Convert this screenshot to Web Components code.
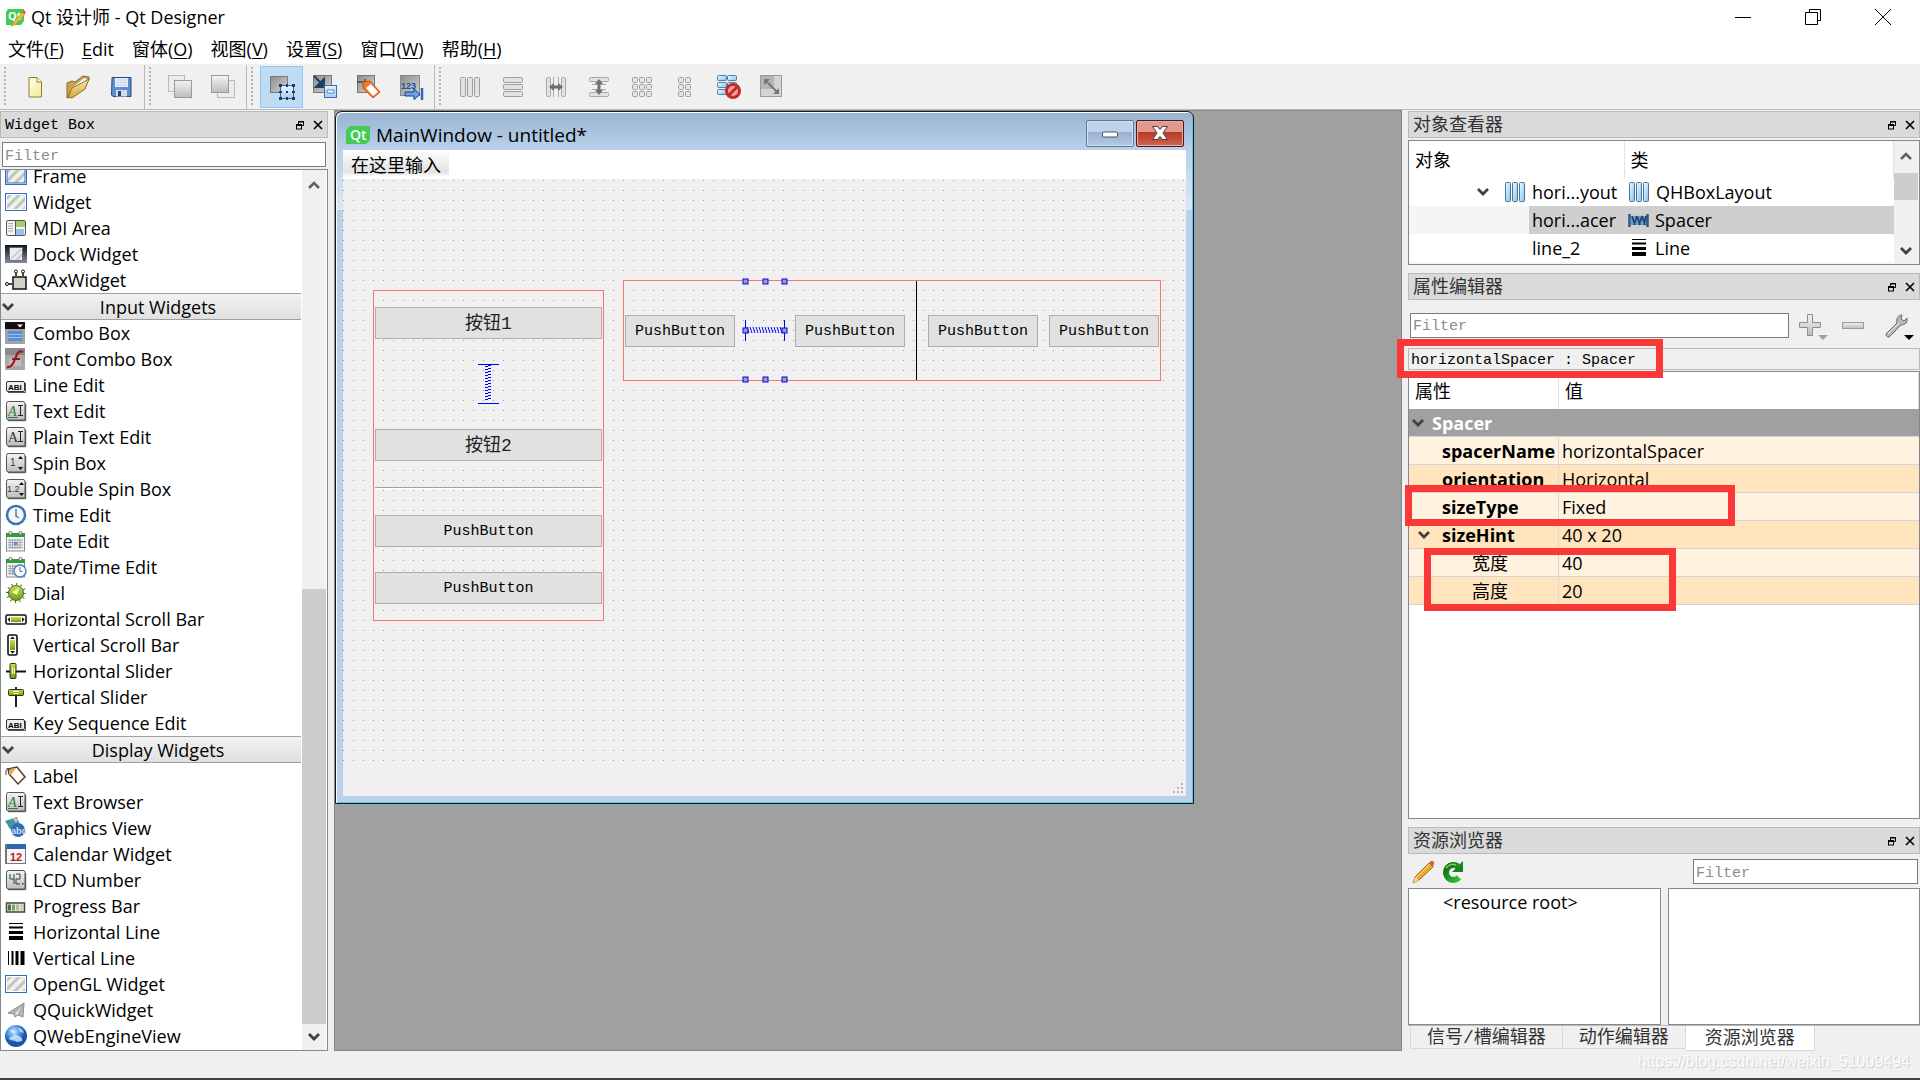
<!DOCTYPE html>
<html lang="zh-CN">
<head>
<meta charset="utf-8">
<title>Qt 设计师 - Qt Designer</title>
<style>
  html, body { height: 100%; margin: 0; }
  body {
    --ui: "Open Sans", "Noto Sans CJK SC", sans-serif;
    --mono: "Liberation Mono", "Noto Sans CJK SC", monospace;
    --line: #828790;
    --soft: #bababa;
    --face: #f0f0f0;
    font: 18px/26px var(--ui);
    color: #000;
    background: var(--face);
    overflow: hidden;
  }
</style>
</head>
<body>
<designer-app></designer-app>

<script>
const define = (name, html, setup) => {
  const template = document.createElement('template');
  template.innerHTML = html;
  customElements.define(name, class extends HTMLElement {
    constructor() {
      super();
      this.attachShadow({ mode: 'open' }).append(template.content.cloneNode(true));
    }
    connectedCallback() { if (setup) setup.call(this, this.shadowRoot); }
  });
};

/* ---------- icons ---------- */
const DEFS = `<defs>
  <linearGradient id="gr" x2="0" y2="1"><stop stop-color="#f4f4f4"/><stop offset="1" stop-color="#bcbcbc"/></linearGradient>
  <linearGradient id="dg" x2="1" y2="1"><stop stop-color="#8c8c8c"/><stop offset="1" stop-color="#d4d4d4"/></linearGradient>
  <linearGradient id="bl" x2="1" y2="1"><stop stop-color="#f2fbff"/><stop offset="1" stop-color="#7cc3ee"/></linearGradient>
  <linearGradient id="lb" x2="0" y2="1"><stop stop-color="#eaf2ff"/><stop offset="1" stop-color="#a9caf5"/></linearGradient>
  <linearGradient id="ye" x2="1" y2="1"><stop stop-color="#fffdee"/><stop offset="1" stop-color="#f7e88c"/></linearGradient>
  <linearGradient id="fo" x2="0" y2="1"><stop stop-color="#fbe9a4"/><stop offset="1" stop-color="#d9a638"/></linearGradient>
  <linearGradient id="bk" x2="0" y2="1"><stop stop-color="#111"/><stop offset="1" stop-color="#8b8b8b"/></linearGradient>
  <linearGradient id="gn" x2="0" y2="1"><stop stop-color="#c8e254"/><stop offset="1" stop-color="#6f9a10"/></linearGradient>
  <linearGradient id="pa" x2="1" y2="1"><stop stop-color="#0c6a14"/><stop offset="1" stop-color="#2fc22f"/></linearGradient>
  <radialGradient id="gl" cx=".4" cy=".3"><stop stop-color="#c8e6ff"/><stop offset=".6" stop-color="#4a93e0"/><stop offset="1" stop-color="#1b55a8"/></radialGradient>
</defs>`;
const BARS = (fill, stroke) => [2, 9, 16].map(x => `<rect x="${x + .5}" y="2.5" width="5" height="19" rx="1" fill="${fill}" stroke="${stroke}"/>`).join('');
const GRID = (xs, ys, w, h, fill, stroke) => ys.map(y => xs.map(x => `<rect x="${x + .5}" y="${y + .5}" width="${w}" height="${h}" rx="1" fill="${fill}" stroke="${stroke}"/>`).join('')).join('');
const CARD = `<rect x="1.500" y="1.500" width="18.500" height="18.500" rx="2" fill="url(#gr)" stroke="#555"/><path d="M3 20.700h17.700V4" fill="none" stroke="#444"/>`;
const HATCH = inner => `<rect x=".5" y="2.500" width="21" height="17" fill="#fff" stroke="#2f6fbe"/><rect x="2" y="4" width="18" height="14" fill="#eef0ee"/><path d="M2 14 12 4h4L2 18zM8 18 20 6v4l-8 8zM2 6l2-2h3L2 9zM17 18l3-3v3z" fill="#bfc2bf"/>${inner || ''}`;
const ABI = `<rect x="1.500" y="7.500" width="18" height="10" rx="1.500" fill="#eee" stroke="#333"/><path d="M3 18.500h17.500V9" fill="none" stroke="#555"/><text x="3" y="15.500" font-size="8" font-family="Liberation Sans" font-weight="700">ABI</text>`;
const CAL = `<rect x="1.500" y="4" width="18" height="17" fill="#f3f3f3" stroke="#8c8c8c"/><path d="M1 3h19v4H1z" fill="#2f9e37"/><path d="M3 10h15M3 12.500h15M3 15h15M3 17.500h15M5 9v10M7.500 9v10M10 9v10M12.500 9v10M15 9v10" stroke="#a6a6a6" stroke-width="1"/><circle cx="5.500" cy="3" r="1.600" fill="#eee" stroke="#777"/><circle cx="15.500" cy="3" r="1.600" fill="#eee" stroke="#777"/>`;
const TAG = `<path d="M3 4 12 2l8 10-7 7L4 9z" fill="#fff" stroke="#5a3a20" stroke-width="1.500"/><path d="M4 4 11 3 6 10 4 9z" fill="#f2a45a"/><path d="M1 4h5M1 5v5" stroke="#444" fill="none"/>`;
const HLINES = `<path d="M4 2.500h14" stroke="#000"/><path d="M4 6.500h14" stroke="#000" stroke-width="2"/><path d="M4 11.500h14" stroke="#000" stroke-width="3"/><path d="M4 17h14" stroke="#000" stroke-width="4"/>`;
const AI = color => `${CARD}<text x="3" y="16" font-size="14" font-family="Liberation Serif" fill="${color[0]}" font-style="${color[1]}">A</text><path d="M13 5.500h5M13 15.500h5M15.500 5.500v10" stroke="#222" fill="none"/>${color[2] || ''}`;

const ICONS = {
  app: [20, `<path d="M3 2h16v12l-3 4H1V5z" fill="#41cd52"/><text x="3" y="13" font-size="11" font-weight="700" font-family="Open Sans" fill="#fff">Qt</text><path d="M7 18 17 5l3 2L10 18l-4 1z" fill="#f5b93a" stroke="#c9862a" stroke-width=".6"/><path d="m17 5 2-2 2 2-1.500 2z" fill="#f0503c"/>`],
  qt: [24, `<path d="M4 3h20v14l-4 4H0V7z" fill="#41cd52"/><text x="4" y="17" font-size="14" font-weight="600" font-family="Open Sans" fill="#fff">Qt</text>`],
  newfile: [24, `<path d="M6 2.500h8l4.500 4.500v15H6z" fill="url(#ye)" stroke="#8f7c35"/><path d="M14 2.500V7h4.500" fill="#fff" stroke="#8f7c35"/>`],
  open: [26, `<path d="M2 24V9l5-2 3 1 8-6 6 1v3L7 22z" fill="#caa04a" stroke="#8a6a25"/><path d="M5 15 19 4l4 1L9 18z" fill="#fff" stroke="#aaa" stroke-width=".6"/><path d="m3 23 4-9 17-9-4 10-13 9z" fill="url(#fo)" stroke="#8a6a25"/>`],
  save: [24, `<path d="M3 2.500h19v19H4l-1.500-1.500z" fill="#5b8fd0" stroke="#2a4a7c"/><path d="M6 3h13v9H6z" fill="#e8f1fb"/><path d="M7 5h11M7 7.500h11M7 10h11" stroke="#bdd0e8"/><path d="M7 15h11v6.500H7z" fill="#d8dde3"/><path d="M9 16h3v5H9z" fill="#27456f"/>`],
  front: [26, `<rect x="1.500" y="1.500" width="16" height="16" fill="#ececec" stroke="#bbb"/><rect x="7.500" y="6.500" width="17" height="17" fill="url(#gr)" stroke="#9a9a9a"/>`],
  back: [26, `<rect x="7.500" y="6.500" width="17" height="17" fill="#ececec" stroke="#bbb"/><rect x="1.500" y="1.500" width="17" height="17" fill="url(#gr)" stroke="#9a9a9a"/>`],
  editw: [26, `<rect x="1.500" y="2.500" width="17" height="16" fill="url(#dg)" stroke="#777"/><rect x="11.500" y="11.500" width="13" height="13" fill="url(#lb)" stroke="#3a6496"/><g fill="#173f6d"><path d="M10 10h3v3h-3zM17 10h2v3h-2zM23 10h3v3h-3zM10 17h3v2h-3zM23 17h3v2h-3zM10 23h3v3h-3zM17 23h2v3h-2zM23 23h3v3h-3zM17 17h2v2h-2z"/></g>`],
  edits: [26, `<rect x="1.500" y="1.500" width="18" height="17" fill="url(#dg)" stroke="#777"/><path d="m2 2 8 8M12 5v8H4z" stroke="#1e3f66" stroke-width="2" fill="#1e3f66"/><rect x="12.500" y="11.500" width="12" height="12" fill="url(#lb)" stroke="#3a6fb4"/><path d="M15 16h7v3h-7z" fill="#fff" stroke="#4d86cf"/>`],
  editb: [26, `<rect x="2.500" y="1.500" width="17" height="17" fill="url(#dg)" stroke="#777"/><path d="M2 8h8V5" fill="none" stroke="#222"/><path d="m8 8 7-1 10 11-7 6L8 14z" fill="#f47b20" stroke="#c4500f"/><path d="m16 10 7 8-5 4-7-8z" fill="#fff"/>`],
  editt: [26, `<rect x="2.500" y="1.500" width="19" height="20" fill="url(#dg)" stroke="#888"/><text x="3" y="15" font-size="9" font-family="Liberation Sans" font-weight="700" fill="#1d4f9e">123</text><path d="M7 18h9v-3l6 5.500-6 5V22H7z" fill="#6fa4e4" stroke="#173f7d"/><path d="M24 14v12" stroke="#2a68c8" stroke-width="2.500"/>`],
  layh: [24, BARS('#e2e2e2', '#9e9e9e')],
  layv: [24, GRID([2], [2, 9, 16], 19, 5, '#e2e2e2', '#9e9e9e')],
  splh: [24, GRID([2, 17], [2], 4, 19, '#e2e2e2', '#a8a8a8') + `<path d="M9.500 2v20M14.500 2v20" stroke="#aaa"/><path d="m5 12 5-4v2.500h4V8l5 4-5 4v-2.500h-4V16z" fill="#6f6f6f"/>`],
  splv: [24, GRID([2], [2, 17], 19, 4, '#e2e2e2', '#a8a8a8') + `<path d="M5 9.500h14M5 14.500h14" stroke="#aaa"/><path d="m12 4 4 5h-2.500v6H16l-4 5-4-5h2.500V9H8z" fill="#6f6f6f"/>`],
  layg: [24, GRID([2, 9, 16], [2, 9, 16], 5, 5, '#e6e6e6', '#9e9e9e')],
  layf: [24, GRID([5, 12], [2, 9, 16], 5, 5, '#e6e6e6', '#9e9e9e')],
  breakl: [26, GRID([2, 12], [1, 8, 15], 9, 5, 'url(#bl)', '#4e7fa8') + `<circle cx="18" cy="17" r="6.500" fill="#e9a8a0" stroke="#c62828" stroke-width="3"/><path d="m13.500 21.500 9-9" stroke="#c62828" stroke-width="3"/>`],
  adjust: [26, `<rect x="2.500" y="1.500" width="21" height="21" fill="#d4d4d4" stroke="#9a9a9a"/><rect x="3" y="2" width="13" height="13" fill="#b4b4b4"/><path d="m8 7 12 12" stroke="#777" stroke-width="2"/><path d="M6 5h6l-6 6zM21 20h-6l6-6z" fill="#777"/>`],
  frame: [22, HATCH('<rect x="2" y="4" width="18" height="14" fill="none" stroke="#2f6fbe"/>')],
  widget: [22, HATCH()],
  mdi: [22, `<rect x="1.500" y="3.500" width="19" height="15" rx="1.500" fill="#f4f4f4" stroke="#555"/><path d="M10 4h10v6H10z" fill="#a5cc6b"/><path d="M3 6.500h5M3 9h5M3 11.500h5M3 14h5" stroke="#aaa"/><path d="M11 12h8v6h-8z" fill="#9cc0ee"/><path d="M10.500 4v14" stroke="#555"/>`],
  dock: [22, `<rect y="2" width="22" height="18" fill="url(#bk)"/><rect x="4.500" y="4.500" width="13" height="13" fill="#eceeec" stroke="#1d5fae" stroke-dasharray="2 1"/><path d="m6 15 9-9h2L6 17zM10 17l7-7v3l-4 4z" fill="#c6c6c6"/>`],
  axw: [22, `<rect x="8" y="8" width="13" height="12" fill="#d5d0c8" stroke="#111" stroke-width="1.500"/><path d="M11 7V3M18 7V3M7 15H3" stroke="#111" stroke-width="1.500"/><circle cx="11" cy="2.500" r="1.500" fill="#fff" stroke="#111"/><circle cx="18" cy="2.500" r="1.500" fill="#fff" stroke="#111"/><circle cx="2" cy="15" r="1.500" fill="#fff" stroke="#111"/>`],
  combo: [22, `<rect x="0" y="0" width="20" height="22" fill="#a2a2a2"/><path d="M0 0h20v7H0z" fill="#111"/><path d="M12 2.500h6l-3 3z" fill="#fff"/><path d="M3 9h14v10H3z" fill="#5a8ed2"/><path d="M3 12.500h14M3 15.500h14" stroke="#9dc0ee"/>`],
  fontcombo: [22, `<rect x="0" y="0" width="20" height="22" fill="#a8a8a8"/><path d="M0 0h20v7H0z" fill="#8a8a8a"/><path d="M4 10h12v8H4z" fill="#bdbdbd"/><path d="M18 4c-4-2-6 1-8 7s-4 9-8 8M7 11h8" stroke="#a31515" stroke-width="2.200" fill="none"/>`],
  abi: [22, ABI],
  textedit: [22, AI(['#2a7a35', 'italic', '<path d="M3 17.500h10" stroke="#2a7a35"/>'])],
  plain: [22, AI(['#333', 'normal'])],
  spin: [22, CARD + `<text x="5" y="14" font-size="10" font-family="Liberation Sans" fill="#333">1</text><path d="M13 7h5l-2.500-3zM13 15h5l-2.500 3z" fill="#111"/>`],
  dspin: [22, CARD + `<text x="2" y="14" font-size="9" font-family="Liberation Sans" fill="#333">1.2</text><path d="M14 7h5l-2.500-3zM14 15h5l-2.500 3z" fill="#111"/>`],
  time: [22, `<circle cx="11" cy="11" r="9" fill="#f5f8fb" stroke="#3c74b8" stroke-width="2.500"/><path d="M11 5v7l3 2" fill="none" stroke="#54789f" stroke-width="1.500"/>`],
  date: [22, CAL + '<path d="M9 12h3v3H9z" fill="#4d8fe8"/>'],
  datetime: [22, CAL + `<circle cx="15" cy="15" r="6" fill="#f5f8fb" stroke="#4a80c0" stroke-width="1.500"/><path d="M15 11v4.500h2.500" fill="none" stroke="#54789f"/>`],
  dial: [22, `<circle cx="11" cy="11" r="9" fill="none" stroke="#555" stroke-width="2" stroke-dasharray="1 3.700"/><circle cx="11" cy="11" r="7.500" fill="url(#gn)" stroke="#4c6a10"/><path d="m7 10 7-4-2 7z" fill="#f4fbe0"/>`],
  hscroll: [22, `<rect x="1" y="7" width="20" height="9" rx="1.500" fill="#fff" stroke="#111" stroke-width="1.600"/><path d="M6 9h10v5H6z" fill="url(#gn)"/><path d="M5 9v5l-2.500-2.500zM17 9v5l2.500-2.500z" fill="#111"/>`],
  vscroll: [22, `<rect x="3" y="1" width="9" height="20" rx="1.500" fill="#fff" stroke="#111" stroke-width="1.600"/><path d="M5 6h5v10H5z" fill="url(#gn)"/><path d="M5 5h5L7.500 2.500zM5 17h5l-2.500 2.500z" fill="#111"/>`],
  hslider: [22, `<path d="M1 11.500h20" stroke="#111" stroke-width="2"/><rect x="5" y="3.500" width="6" height="15" rx="1" fill="url(#gn)" stroke="#2c3a08"/><path d="M7.500 8v6M9.500 8v6" stroke="#f2f8d8"/>`],
  vslider: [22, `<path d="M11 1v20" stroke="#222" stroke-width="2"/><rect x="3.500" y="3.500" width="15" height="6" rx="1" fill="url(#gn)" stroke="#2c3a08"/><path d="M8 5.500h6M8 7.500h6" stroke="#f2f8d8"/>`],
  label: [22, TAG],
  graphics: [22, `<path d="m0 4 12-4 4 11-8 5z" fill="#3f8ee6"/><path d="m2 4 4 1 1 5-3 1z" fill="#3da53a"/><path d="m8 1 5 1-2 4z" fill="#f2d23c"/><circle cx="13" cy="13" r="7" fill="#2f6db5"/><text x="6" y="17" font-size="9" font-weight="700" font-family="Liberation Sans" fill="#cfe0f5">abc</text>`],
  calendar: [22, `<path d="M0 1h21v20H0z" fill="#777"/><path d="M2 6h18v14H2z" fill="#f5f5f5"/><path d="M2 1h19v5H2z" fill="#2f67ad"/><text x="5" y="17.500" font-size="11" font-weight="700" font-family="Liberation Sans" fill="#b3191b">12</text>`],
  lcd: [22, CARD + `<path d="M5 5v5h4M9 5v10M11 5h4v5h-4v5h4" fill="none" stroke="#1e4f22"/><path d="M17 14h1.500v1.500H17z" fill="#1e4f22"/>`],
  progress: [22, `<rect x="1.500" y="8" width="18" height="9" fill="#e8e8e8" stroke="#444" stroke-width="1.500"/><path d="M3 9.500h3v6H3z" fill="#4c7a2c"/><path d="M7 9.500h3v6H7z" fill="#7ba35e"/><path d="M11 9.500h3v6h-3z" fill="#a9c397"/><path d="M15 9.500h3v6h-3z" fill="#c9d2c4"/>`],
  hline: [22, HLINES],
  vline: [22, `<path d="M3.500 4v14" stroke="#000"/><path d="M7.500 4v14" stroke="#000" stroke-width="2"/><path d="M12 4v14" stroke="#000" stroke-width="3"/><path d="M17.500 4v14" stroke="#000" stroke-width="4"/>`],
  quick: [22, `<path d="M3 14 19 4l-1 14-5-2-3 2-1-3z" fill="#b8b8b8" stroke="#8e8e8e"/><path d="M9 15 19 4l-6 12" fill="#e4e4e4" stroke="#8e8e8e" stroke-width=".8"/>`],
  web: [22, `<circle cx="11" cy="11" r="11" fill="url(#gl)"/><path d="M4 5c4 0 7 1 6 4s-5 2-6 5c3 2 6 1 8 3l5-1c1-3-2-5-4-5" fill="#d6ebff" opacity=".8"/><path d="M13 3c3 0 5 2 6 5l-4-1z" fill="#d6ebff" opacity=".7"/>`],
  hbox: [22, `<g transform="translate(-1 -1)">${BARS('url(#bl)', '#4f7396')}</g>`],
  spacer: [22, `<path d="M3 7h16v9H3z" fill="#6d9cc6"/><path d="M1.500 5v13M19.500 5v13" stroke="#2c5a85" stroke-width="2.500"/><path d="m4 7 3 9M9 7l-3 9M9 7l3 9M14 7l-3 9M14 7l3 9M18 7l-2 9" fill="none" stroke="#1d4367" stroke-width="1.600"/>`],
  plus: [24, `<path d="M9.500 1.500h5v8h8v5h-8v8h-5v-8h-8v-5h8z" fill="url(#gr)" stroke="#8d8d8d"/>`],
  minus: [24, `<rect x="1.500" y="9.500" width="21" height="6" fill="url(#gr)" stroke="#9a9a9a"/>`],
  wrench: [24, `<path d="m2 21 11-11c-1-4 1-8 5-8l-1 4 3 2 3-3c1 4-2 7-6 7L5 24c-2 0-3-1-3-3z" fill="#b9b9b9" stroke="#666"/><path d="m4 21 11-11" stroke="#eee"/>`],
  pencil: [24, `<path d="m1 23 2-6L17 3l4 4L7 20z" fill="#f3a829" stroke="#9a6a1c"/><path d="m1 23 2-6 4 3z" fill="#f0d6a8"/><path d="m17 3 2-2c2-1 4 2 3 3l-1 3z" fill="#d0604a"/><path d="m4 18 14-14" stroke="#fbd88a"/>`],
  reload: [24, `<path d="M18 17.500A7.500 7.500 0 1 1 17 6.500" fill="none" stroke="url(#pa)" stroke-width="6"/><path d="M22 1v11H11z" fill="#15851c"/><path d="M5 8a8 8 0 0 1 10-3" fill="none" stroke="#7ccf76" stroke-width="1.500"/>`],
  up: [14, `<path d="m2 10 5-5 5 5" fill="none" stroke="#606060" stroke-width="2.500"/>`],
  down: [14, `<path d="m2 4 5 5 5-5" fill="none" stroke="#404040" stroke-width="2.800"/>`],
  float: [10, `<path d="M3.500 4V1.500h5v4H7M3 2h6" fill="none" stroke="#000"/><rect x="1.500" y="5" width="5" height="4" fill="none" stroke="#000"/><path d="M1 5h6" stroke="#000" stroke-width="2"/>`],
  close: [10, `<path d="m1 1 8 8M9 1 1 9" stroke="#000" stroke-width="1.600"/>`],
  winmin: [16, `<path d="M0 8.500h16" stroke="#000"/>`],
  winmax: [16, `<path d="M4.500 3.500v-3h11v11h-3M.5 3.500h12v12H.5z" fill="none" stroke="#000"/>`],
  winclose: [16, `<path d="m0 0 16 16M16 0 0 16" stroke="#000"/>`],
  drop: [10, `<path d="M0 3h10L5 8z" fill="currentColor"/>`],
  submin: [18, `<rect x="1.500" y="8" width="15" height="5" rx="1" fill="#fff" stroke="#44546a"/>`],
  subclose: [18, `<path d="M1.500 2.500h5L9 5.500l2.500-3h5L12 9l4.500 6.500h-5L9 12.500l-2.500 3h-5L6 9z" fill="#fafafa" stroke="#4a3a44"/>`],
  grip: [12, `<path d="M9 1h2v2H9zM9 5h2v2H9zM9 9h2v2H9zM5 5h2v2H5zM5 9h2v2H5zM1 9h2v2H1z" fill="#b4b4b4"/>`]
};
define('ui-icon', `<style>:host{display:inline-block;flex:none;line-height:0}svg{display:block;overflow:visible}</style>`, function (root) {
  const [size, body] = ICONS[this.getAttribute('name')];
  root.innerHTML += `<svg width="${size}" height="${size}" viewBox="0 0 ${size} ${size}" aria-hidden="true">${DEFS}${body}</svg>`;
});

/* ---------- window chrome ---------- */
define('title-bar', `<style>
  :host{display:flex;align-items:center;height:34px;background:#fff;padding:0 2px 0 5px}
  ui-icon{margin-right:6px}
  h1{font:inherit;line-height:34px;margin:0;flex:1}
  button{border:0;background:none;width:70px;height:34px;padding:0;display:grid;place-items:center}
  button ui-icon{margin:0}
</style><ui-icon name="app"></ui-icon><h1>Qt 设计师 - Qt Designer</h1>
<button aria-label="最小化"><ui-icon name="winmin"></ui-icon></button><button aria-label="还原"><ui-icon name="winmax"></ui-icon></button><button aria-label="关闭"><ui-icon name="winclose"></ui-icon></button>`);

define('menu-bar', `<style>
  :host{display:flex;height:30px;background:#fff;padding-left:8px;gap:18px;border-bottom:1px solid #f0f0f0}
  button{font:inherit;border:0;background:none;padding:0;line-height:30px}
  u{text-underline-offset:2px;text-decoration-thickness:1px}
</style>
<button>文件(<u>F</u>)</button><button><u>E</u>dit</button><button>窗体(<u>O</u>)</button><button>视图(<u>V</u>)</button><button>设置(<u>S</u>)</button><button>窗口(<u>W</u>)</button><button>帮助(<u>H</u>)</button>`);

define('tool-group', `<style>
  :host{display:flex;align-items:center;height:44px;padding:0 2px 0 4px;border-right:1px solid var(--soft)}
  :host(:last-of-type){border:0}
  i{width:2px;height:40px;margin-right:7px;background:repeating-linear-gradient(#b4b4b4 0 2px,transparent 2px 4px)}
</style><i></i><slot></slot>`);
define('tool-button', `<style>
  button{width:43px;height:42px;padding:0;border:1px solid transparent;background:none;display:grid;place-items:center}
  :host([checked]) button{background:#c0dcf3;border-color:#90c8f6}
</style><button></button>`, function (root) {
  const name = this.getAttribute('icon');
  const icon = document.createElement('ui-icon');
  icon.setAttribute('name', name);
  const button = root.querySelector('button');
  button.replaceChildren(icon);
  button.setAttribute('aria-label', name);
});
define('tool-bar', `<style>:host{display:flex;height:44px;border-bottom:1px solid var(--soft);background:var(--face)}</style>
${[['newfile', 'open', 'save'], ['front', 'back'], ['editw', 'edits', 'editb', 'editt'], ['layh', 'layv', 'splh', 'splv', 'layg', 'layf', 'breakl', 'adjust']]
  .map(g => `<tool-group>${g.map(n => `<tool-button icon="${n}"${n === 'editw' ? ' checked' : ''}></tool-button>`).join('')}</tool-group>`).join('')}`);

/* ---------- shared parts ---------- */
define('dock-title', `<style>
  :host{display:flex;align-items:center;height:25px;border:1px solid var(--soft);background:#dadada;padding-left:4px}
  h2{flex:1;margin:0;padding-top:3px;font:15px/24px var(--mono)}
  :host([zh]) h2{font-size:18px;color:#333}
  button{width:18px;height:18px;padding:0;border:0;background:none;display:grid;place-items:center}
</style><h2><slot></slot></h2><button aria-label="浮动"><ui-icon name="float"></ui-icon></button><button aria-label="关闭"><ui-icon name="close"></ui-icon></button>`);
define('filter-box', `<style>
  :host{display:block}
  input{display:block;box-sizing:border-box;width:100%;height:25px;border:1px solid #7a7a7a;background:#fff;padding:3px 2px 0;font:15px/20px var(--mono)}
  input::placeholder{color:#8c8c8c;opacity:1}
</style><input type="text" placeholder="Filter" aria-label="Filter">`);
define('scroll-strip', `<style>
  :host{display:flex;flex-direction:column;width:24px;flex:none;background:var(--face)}
  .a{height:30px;display:grid;place-items:center}
  .z{height:26px}
  .b{flex:var(--before)}.t{flex:var(--thumb);background:#cdcdcd}.c{flex:var(--after)}
</style><div class="a"><ui-icon name="up"></ui-icon></div><div class="b"></div><div class="t"></div><div class="c"></div><div class="a z"><ui-icon name="down"></ui-icon></div>`);

/* ---------- widget box ---------- */
const WIDGETS = [
  ['frame', 'Frame'], ['widget', 'Widget'], ['mdi', 'MDI Area'], ['dock', 'Dock Widget'], ['axw', 'QAxWidget'],
  'Input Widgets',
  ['combo', 'Combo Box'], ['fontcombo', 'Font Combo Box'], ['abi', 'Line Edit'], ['textedit', 'Text Edit'], ['plain', 'Plain Text Edit'], ['spin', 'Spin Box'], ['dspin', 'Double Spin Box'], ['time', 'Time Edit'], ['date', 'Date Edit'], ['datetime', 'Date/Time Edit'], ['dial', 'Dial'], ['hscroll', 'Horizontal Scroll Bar'], ['vscroll', 'Vertical Scroll Bar'], ['hslider', 'Horizontal Slider'], ['vslider', 'Vertical Slider'], ['abi', 'Key Sequence Edit'],
  'Display Widgets',
  ['label', 'Label'], ['textedit', 'Text Browser'], ['graphics', 'Graphics View'], ['calendar', 'Calendar Widget'], ['lcd', 'LCD Number'], ['progress', 'Progress Bar'], ['hline', 'Horizontal Line'], ['vline', 'Vertical Line'], ['widget', 'OpenGL Widget'], ['quick', 'QQuickWidget'], ['web', 'QWebEngineView']
];
define('widget-box', `<style>
  :host{display:flex;flex-direction:column;width:328px;flex:none;padding-top:1px}
  filter-box{margin:4px 2px 2px}
  .list{flex:1;min-height:0;display:flex;border:1px solid var(--line);background:#fff;padding-right:1px}
  .items{flex:1;display:flex;flex-direction:column;justify-content:flex-end;overflow:hidden;padding-bottom:1px}
  .row{flex:none;display:flex;align-items:center;height:26px;padding-left:4px;gap:6px}
  .head{flex:none;display:flex;align-items:center;height:25px;margin-right:1px;border:solid #a0a0a0;border-width:1px 0;background:linear-gradient(#f2f2f2,#e0e0e0)}
  .head b{flex:1;font-weight:400;text-align:center}
</style><dock-title>Widget Box</dock-title><filter-box></filter-box>
<div class="list"><div class="items">${WIDGETS.map(w => typeof w === 'string'
  ? `<div class="head"><ui-icon name="down"></ui-icon><b>${w}</b></div>`
  : `<div class="row"><ui-icon name="${w[0]}"></ui-icon><span>${w[1]}</span></div>`).join('')}</div>
<scroll-strip style="--before:389;--thumb:435;--after:0"></scroll-strip></div>`);

/* ---------- form being edited ---------- */
define('push-button', `<style>
  :host{display:block;flex:none}
  button{display:block;width:100%;height:32px;padding:2px 0 0;border:1px solid #adadad;background:#e1e1e1;font:15px/28px var(--mono);color:#000}
  :host([zh]) button{font-size:18px;color:#222}
</style><button><slot></slot></button>`);

const coil = n => Array.from({ length: n }, (_, i) => `M0 ${i * 3 + 2}l6 -2`).join('');
const handle = (x, y) => `<rect x="${x - 2.5}" y="${y - 2.5}" width="5" height="5" fill="#a0a0a0" stroke="#00f"/>`;
define('form-window', `<style>
  :host{position:absolute;left:0;top:0;width:859px;height:693px;box-sizing:border-box;display:flex;flex-direction:column;
    border:1px solid #16191d;border-radius:7px 7px 0 0;padding:0 7px 7px;
    background:linear-gradient(#99b4d1,#b9d1ea 38px,#dce8f5 98px,#b9d1ea 98px);box-shadow:inset 1px 1px #fff,inset -1px -1px #3fd0f2}
  header{display:flex;align-items:center;height:38px;box-sizing:border-box;flex:none;padding:8px 2px 0 3px}
  h2{font:19px/26px var(--ui);margin:0 0 0 6px;flex:1}
  header button{width:48px;height:27px;padding:0;margin:0 0 4px 2px;border:1px solid #5f7590;border-radius:2px;box-shadow:inset 0 0 0 1px #d5e3f2;background:linear-gradient(#bed2e8 45%,#97b0cd 45%,#b3cae4);display:grid;place-items:center}
  header button.x{border-color:#4a1722;box-shadow:inset 0 0 0 1px #e8aca4;background:linear-gradient(#e39a8e 45%,#b83a24 45%,#cf6652)}
  nav{height:29px;flex:none;background:#fff}
  nav button{height:27px;padding:3px 8px 0;border:0;font:18px/24px var(--ui);background:linear-gradient(#fff,#e2e2e2 80%,#fff)}
  .canvas{flex:1;position:relative;background:
    linear-gradient(90deg,transparent 1px,#f0f0f0 1px) 0 1px/10px 10px,
    linear-gradient(#9a9a9a 1px,#f0f0f0 1px) 0 1px/10px 10px}
  footer{height:28px;flex:none;background:#f0f0f0;display:flex;justify-content:flex-end;align-items:flex-end}
  footer ui-icon{margin:0 2px 2px 0}
  .v,.h{position:absolute;box-sizing:border-box;display:flex;border:1px solid #f57575}
  .v{left:30px;top:111px;width:231px;height:331px;flex-direction:column;justify-content:space-between;padding:16px 1px}
  .h{left:280px;top:101px;width:538px;height:101px;align-items:center;gap:10px;padding:0 1px}
  .h push-button{width:110px}
  .h push-button:last-child{margin-left:auto}
  svg{display:block;overflow:visible;flex:none}
  .v svg{align-self:center}
  .hr{height:1px;border-top:1px solid #a0a0a0;border-bottom:1px solid #fff;background:#fff}
  .vr{width:1px;margin:0 1px;align-self:stretch;background:#000}
</style>
<header><ui-icon name="qt"></ui-icon><h2>MainWindow - untitled*</h2><button aria-label="最小化"><ui-icon name="submin"></ui-icon></button><button class="x" aria-label="关闭"><ui-icon name="subclose"></ui-icon></button></header>
<nav><button>在这里输入</button></nav>
<div class="canvas">
  <div class="v">
    <push-button zh>按钮1</push-button>
    <svg width="21" height="40" fill="none" stroke="#00f" shape-rendering="crispEdges"><path d="M0 .5h21M0 39.500h21"/><path transform="translate(7 1)" d="${coil(12)}"/></svg>
    <push-button zh>按钮2</push-button>
    <div class="hr"></div>
    <push-button>PushButton</push-button>
    <push-button>PushButton</push-button>
  </div>
  <div class="h">
    <push-button>PushButton</push-button>
    <svg width="40" height="99" fill="none" stroke="#00f"><path d="M.5 39v21M39.500 39v21"/><path transform="translate(2 52) rotate(-90)" d="${coil(12)}"/>${[0.5, 49.5, 98.5].map(y => [0.5, 20.5, 39.5].filter(x => y !== 49.5 || x !== 20.5).map(x => handle(x, y)).join('')).join('')}</svg>
    <push-button>PushButton</push-button>
    <div class="vr"></div>
    <push-button>PushButton</push-button>
    <push-button>PushButton</push-button>
  </div>
</div>
<footer><ui-icon name="grip"></ui-icon></footer>`);

define('mdi-area', `<style>:host{display:block;position:relative;flex:1;min-width:0;background:#a0a0a0;border:solid var(--line);border-width:1px;overflow:hidden}</style><form-window></form-window>`);

/* ---------- right docks ---------- */
define('object-inspector', `<style>
  :host{display:block}
  .box{display:flex;height:123px;margin-top:2px;border:1px solid var(--line);background:#f5f5f5;overflow:hidden;padding-right:1px}
  .view{flex:1}
  table{width:100%;table-layout:fixed;border-collapse:collapse}
  th,td{padding:0;text-align:left;font-weight:400;background:#fff;white-space:nowrap}
  th{height:37px;padding-left:6px;border-right:1px solid #e2e2e2}
  td{height:28px}
  td div{display:flex;align-items:center;padding-left:4px;gap:5px}
  td:first-child div{padding-left:123px}
  tr.p td div{gap:6px}
  tr.p td:first-child div{padding-left:67px}
  tr.p ui-icon + ui-icon{margin-left:8px}
  tr.s td{background:#cfcfcf}
  tr.s td:first-child{background:linear-gradient(90deg,#f5f5f5 120px,#cfcfcf 120px)}
</style><dock-title zh>对象查看器</dock-title>
<div class="box"><div class="view"><table><colgroup><col style="width:215px"><col></colgroup>
<tr><th>对象</th><th>类</th></tr>
<tr class="p"><td><div><ui-icon name="down"></ui-icon><ui-icon name="hbox"></ui-icon>hori...yout</div></td><td><div><ui-icon name="hbox"></ui-icon>QHBoxLayout</div></td></tr>
<tr class="s"><td><div>hori...acer</div></td><td><div><ui-icon name="spacer"></ui-icon>Spacer</div></td></tr>
<tr><td><div>line_2</div></td><td><div><ui-icon name="hline"></ui-icon>Line</div></td></tr>
</table></div><scroll-strip style="--before:2;--thumb:27;--after:38"></scroll-strip></div>`);

define('property-editor', `<style>
  :host{display:flex;flex-direction:column;flex:1;min-height:0;position:relative}
  .bar{display:flex;align-items:center;height:26px;margin-top:12px;padding:0 4px 0 2px}
  filter-box{flex:1}
  .bar button{position:relative;border:0;background:none;padding:0;width:24px;height:24px;margin-left:19px;color:#a0a0a0}
  .bar button:first-of-type{margin-left:9px}
  .bar button:last-of-type{color:#000;margin-right:8px}
  .bar button ui-icon{display:block}
  .bar button .d{position:absolute;right:-6px;bottom:-5px}
  .obj{height:20px;border:1px solid var(--soft);margin:10px 0 1px;padding-left:2px;font:15px/24px var(--mono)}
  .box{flex:1;border:1px solid var(--line);background:#fff}
  table{width:100%;table-layout:fixed;border-collapse:separate;border-spacing:0}
  th,td{padding:0 0 0 4px;text-align:left;font-weight:400;white-space:nowrap;box-sizing:border-box;border-right:1px solid #d8d8d8}
  td{height:28px;border-bottom:1px solid #d4d4d4}
  td:last-child{border-right:0;padding-left:3px}
  thead th{height:37px;padding-left:6px;border-color:#e2e2e2}
  td:first-child div{display:flex;align-items:center;padding-left:29px;font-weight:700}
  tr:nth-child(odd) td{background:#ffe4bd}
  tr:nth-child(even) td{background:#fff2df}
  tbody tr:first-child td{background:#a0a0a0;color:#fff;padding-left:2px}
  tr.g td:first-child div{padding-left:0;gap:7px}
  tr.e td:first-child div{padding-left:4px;gap:11px}
  tr.c td:first-child div{padding-left:59px;font-weight:400}
  .mark{position:absolute;box-sizing:border-box;border:7px solid #fb3838;pointer-events:none}
  .m1{left:-11px;top:66px;width:266px;height:39px}
  .m2{left:-3px;top:212px;width:330px;height:41px}
  .m3{left:16px;top:275px;width:252px;height:63px}
</style><dock-title zh>属性编辑器</dock-title>
<div class="bar"><filter-box></filter-box><button aria-label="添加"><ui-icon name="plus"></ui-icon><ui-icon class="d" name="drop"></ui-icon></button><button aria-label="移除"><ui-icon name="minus"></ui-icon></button><button aria-label="配置"><ui-icon name="wrench"></ui-icon><ui-icon class="d" name="drop"></ui-icon></button></div>
<div class="obj">horizontalSpacer : Spacer</div>
<div class="box"><table><colgroup><col style="width:150px"><col></colgroup>
<thead><tr><th>属性</th><th>值</th></tr></thead><tbody>
<tr class="g"><td colspan="2"><div><ui-icon name="down"></ui-icon>Spacer</div></td></tr>
<tr><td><div>spacerName</div></td><td>horizontalSpacer</td></tr>
<tr><td><div>orientation</div></td><td>Horizontal</td></tr>
<tr><td><div>sizeType</div></td><td>Fixed</td></tr>
<tr class="e"><td><div><ui-icon name="down"></ui-icon>sizeHint</div></td><td>40 x 20</td></tr>
<tr class="c"><td><div>宽度</div></td><td>40</td></tr>
<tr class="c"><td><div>高度</div></td><td>20</td></tr>
</tbody></table></div>
<div class="mark m1"></div><div class="mark m2"></div><div class="mark m3"></div>`);

define('resource-browser', `<style>
  :host{display:block}
  .bar{display:flex;align-items:center;height:25px;margin:5px 2px 4px 4px;gap:5px}
  .bar button{border:0;background:none;padding:0;width:24px;height:24px}
  filter-box{width:225px;margin-left:auto}
  .panes{display:grid;grid-template-columns:253fr 252fr;gap:7px;height:137px}
  .panes div{border:1px solid var(--line);background:#fff;padding-left:34px}
  .tabs{display:flex;align-items:flex-start;padding-left:2px;border-top:1px solid var(--soft)}
  .tabs button{height:23px;border:1px solid #d9d9d9;border-top:0;background:#f0f0f0;padding:2px 16px 0;font:18px/20px var(--mono);color:#333}
  .tabs button + button{border-left:0}
  .tabs button.on{height:25px;padding:2px 19px 0;background:#fff}
</style><dock-title zh>资源浏览器</dock-title>
<div class="bar"><button aria-label="编辑资源"><ui-icon name="pencil"></ui-icon></button><button aria-label="重新加载"><ui-icon name="reload"></ui-icon></button><filter-box></filter-box></div>
<div class="panes"><div>&lt;resource root&gt;</div><div></div></div>
<div class="tabs"><button>信号/槽编辑器</button><button>动作编辑器</button><button class="on">资源浏览器</button></div>`);

define('designer-app', `<style>
  :host{display:flex;flex-direction:column;height:100vh}
  main{flex:1;min-height:0;display:flex;gap:6px}
  aside{width:512px;flex:none;display:flex;flex-direction:column;gap:8px;padding-top:1px}
  footer{height:27px;flex:none;padding-right:10px;border-bottom:2px solid #444;text-align:right;font:16px/22px "Liberation Sans",sans-serif;color:#fbfbfb;text-shadow:1px 1px #d2d2d2}
</style>
<title-bar></title-bar><menu-bar></menu-bar><tool-bar></tool-bar>
<main><widget-box></widget-box><mdi-area></mdi-area><aside><object-inspector></object-inspector><property-editor></property-editor><resource-browser></resource-browser></aside></main>
<footer>https://blog.csdn.net/weixin_51009494</footer>`);
</script>
</body>
</html>
